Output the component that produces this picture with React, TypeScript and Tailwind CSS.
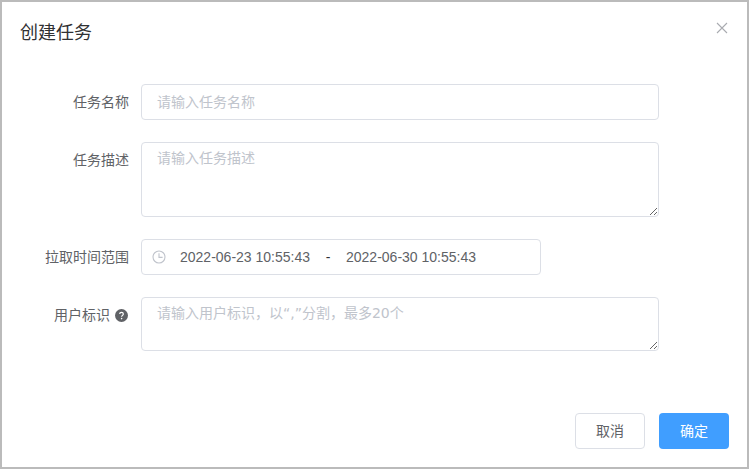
import type { ReactNode } from 'react';

const cjk = "font-['Liberation_Sans','Noto_Sans_CJK_SC',sans-serif]";

function Row({ label, extra, children }: { label: string; extra?: ReactNode; children: ReactNode }) {
  return (
    <div className="flex items-start">
      <label className="flex w-[139px] shrink-0 items-center justify-end gap-[5px] pr-3 text-sm leading-[36px] text-[#606266]">
        {label}
        {extra}
      </label>
      {children}
    </div>
  );
}

function HelpIcon() {
  return (
    <svg width="13" height="13" viewBox="0 0 13 13" className="mr-[1px]">
      <circle cx="6.5" cy="6.5" r="6.5" fill="#606266" />
      <path d="M4.7 5.1c0-1.1.8-1.7 1.8-1.7s1.8.6 1.8 1.6c0 1.3-1.7 1.4-1.7 2.7" fill="none" stroke="#fff" strokeWidth="1.2" />
      <circle cx="6.6" cy="9.6" r=".8" fill="#fff" />
    </svg>
  );
}

function ClockIcon() {
  return (
    <svg width="14" height="14" viewBox="0 0 14 14" fill="none" stroke="#c0c4cc" strokeWidth="1.1">
      <circle cx="7" cy="7" r="6" />
      <path d="M7 3.2V7.4H10.6" />
    </svg>
  );
}

export default function App() {
  return (
    <div className={`${cjk} flex h-[469px] w-[749px] flex-col border-2 border-[#bbbbbb] bg-white`}>
      {/* Header */}
      <div className="flex h-[82px] items-start justify-between pl-[18px] pr-[19px] pt-[19px]">
        <span className="text-lg leading-6 text-[#303133]">创建任务</span>
        <button className="mt-[1px]">
          <svg width="12" height="12" viewBox="0 0 12 12" stroke="#a9abb0" strokeWidth="1.1" className="block">
            <path d="M1 1L11 11M11 1L1 11" />
          </svg>
        </button>
      </div>

      {/* Form */}
      <div className="flex flex-col gap-[22px]">
        <Row label="任务名称">
          <input
            placeholder="请输入任务名称"
            className="h-9 w-[518px] rounded border border-[#dcdfe6] px-[15px] text-sm text-[#606266] outline-none placeholder:text-[#c0c4cc]"
          />
        </Row>
        <Row label="任务描述">
          <textarea
            placeholder="请输入任务描述"
            className="block h-[75px] w-[518px] rounded border border-[#dcdfe6] px-[15px] py-[5px] text-sm leading-[21px] text-[#606266] outline-none placeholder:text-[#c0c4cc]"
          />
        </Row>
        <Row label="拉取时间范围">
          <div className="flex h-9 w-[400px] items-center rounded border border-[#dcdfe6] pl-[10px] text-sm text-[#606266]">
            <ClockIcon />
            <span className="ml-[14px] w-[130px] whitespace-nowrap">2022-06-23 10:55:43</span>
            <span className="w-[36px] text-center text-[#303133]">-</span>
            <span className="w-[131px] whitespace-nowrap">2022-06-30 10:55:43</span>
          </div>
        </Row>
        <Row label="用户标识" extra={<HelpIcon />}>
          <textarea
            placeholder="请输入用户标识，以“,”分割，最多20个"
            className="block h-[54px] w-[518px] rounded border border-[#dcdfe6] px-[15px] py-[5px] font-['DejaVu_Sans','Noto_Sans_CJK_SC',sans-serif] text-sm leading-[21px] text-[#606266] outline-none placeholder:text-[#c0c4cc]"
          />
        </Row>
      </div>

      {/* Footer */}
      <div className="mt-auto flex justify-end gap-[14px] pb-[18px] pr-[18px]">
        <button className="h-9 w-[70px] rounded border border-[#dcdfe6] bg-white text-sm text-[#606266]">取消</button>
        <button className="h-9 w-[70px] rounded bg-[#409eff] text-sm text-white">确定</button>
      </div>
    </div>
  );
}
